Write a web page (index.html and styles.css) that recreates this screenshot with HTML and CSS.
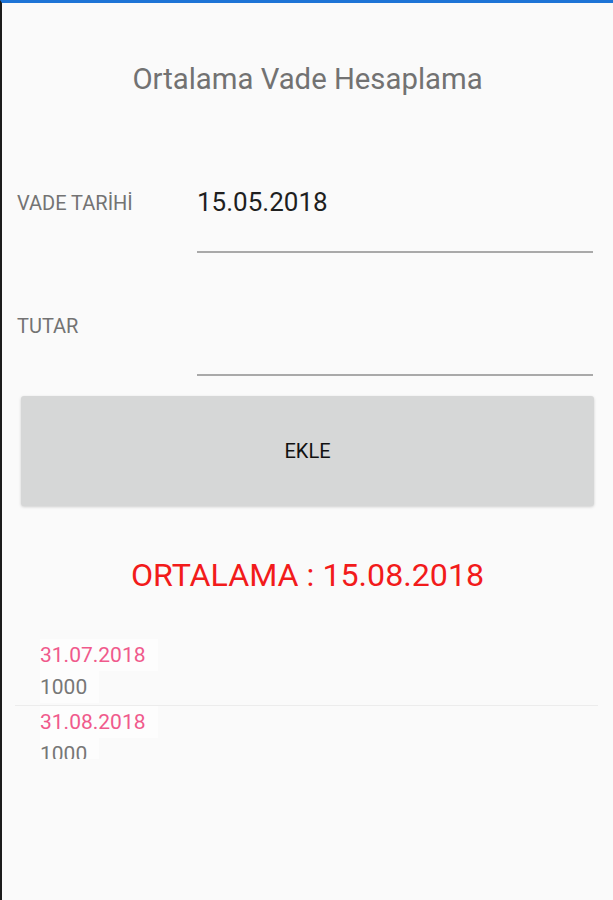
FILE: index.html
```html
<!DOCTYPE html>
<html lang="tr">
<head>
    <meta charset="UTF-8">
    <meta name="viewport" content="width=device-width, initial-scale=1.0">
    <title>Ortalama Vade Hesaplama</title>
    <link rel="stylesheet" href="styles.css">
</head>
<body>
    <div class="screen">
        <h1 class="title">Ortalama Vade Hesaplama</h1>

        <!-- Vade tarihi -->
        <div class="field-row">
            <label class="field-label" for="vadeTarihi">VADE TARİHİ</label>
            <div class="field-input">
                <input type="text" id="vadeTarihi" value="15.05.2018">
            </div>
        </div>

        <!-- Tutar -->
        <div class="field-row">
            <label class="field-label" for="tutar">TUTAR</label>
            <div class="field-input">
                <input type="text" id="tutar" value="">
            </div>
        </div>

        <button class="add-button" type="button">EKLE</button>

        <p class="result">ORTALAMA : 15.08.2018</p>

        <ul class="entry-list">
            <li class="entry">
                <span class="entry-date">31.07.2018</span>
                <span class="entry-amount">1000</span>
            </li>
            <li class="entry">
                <span class="entry-date">31.08.2018</span>
                <span class="entry-amount">1000</span>
            </li>
        </ul>
    </div>
</body>
</html>
```

FILE: styles.css
```css
html, body {
    margin: 0;
    padding: 0;
    height: 100%;
}

body {
    font-family: Roboto, "Noto Sans", Arial, sans-serif;
    background-color: #fafafa;
    color: #212121;
}

.screen {
    box-sizing: border-box;
    height: 900px;
    border-top: 3px solid #1e74d6;
    border-left: 2px solid #1c1c1c;
    overflow: hidden;
}

.title {
    margin: 59px 0 0;
    font-size: 29.3px;
    font-weight: 400;
    line-height: 34px;
    text-align: center;
    color: #727272;
}

.field-row {
    display: flex;
    padding: 0 20px 0 15px;
    margin-top: 57px;
}

.title + .field-row {
    margin-top: 91px;
}

.field-label {
    width: 180px;
    flex-shrink: 0;
    margin-top: 4px;
    font-size: 20px;
    line-height: 24px;
    color: #737373;
}

.field-input {
    flex: 1;
    height: 64px;
    border-bottom: 2px solid #a9a9a9;
}

.field-input input {
    display: block;
    width: 100%;
    padding: 0;
    border: none;
    background: transparent;
    font-family: inherit;
    font-size: 26px;
    line-height: 30px;
    height: 30px;
    color: #1f1f1f;
    outline: none;
}

.add-button {
    display: flex;
    align-items: center;
    justify-content: center;
    box-sizing: border-box;
    width: calc(100% - 38px);
    height: 110px;
    margin: 20px 19px 0;
    border: none;
    border-radius: 3px;
    background-color: #d6d7d7;
    box-shadow: 0 1px 3px rgba(0, 0, 0, 0.18);
    font-family: inherit;
    font-size: 20px;
    font-weight: 400;
    color: #111111;
    cursor: pointer;
}

.result {
    margin: 50px 0 0;
    font-size: 32.2px;
    line-height: 38px;
    text-align: center;
    color: #f21b1b;
}

.entry-list {
    list-style: none;
    margin: 45px 15px 0 13px;
    padding: 0;
    height: 120px;
    overflow: hidden;
}

.entry {
    display: flex;
    flex-direction: column;
    align-items: flex-start;
    padding: 0 0 2px 25px;
    border-bottom: 1px solid #ececec;
}

.entry-date,
.entry-amount {
    font-size: 21px;
    line-height: 32px;
    background-color: #fdfdfd;
    padding-right: 12px;
}

.entry-date {
    color: #f05a8c;
}

.entry-amount {
    color: #777777;
}
```
